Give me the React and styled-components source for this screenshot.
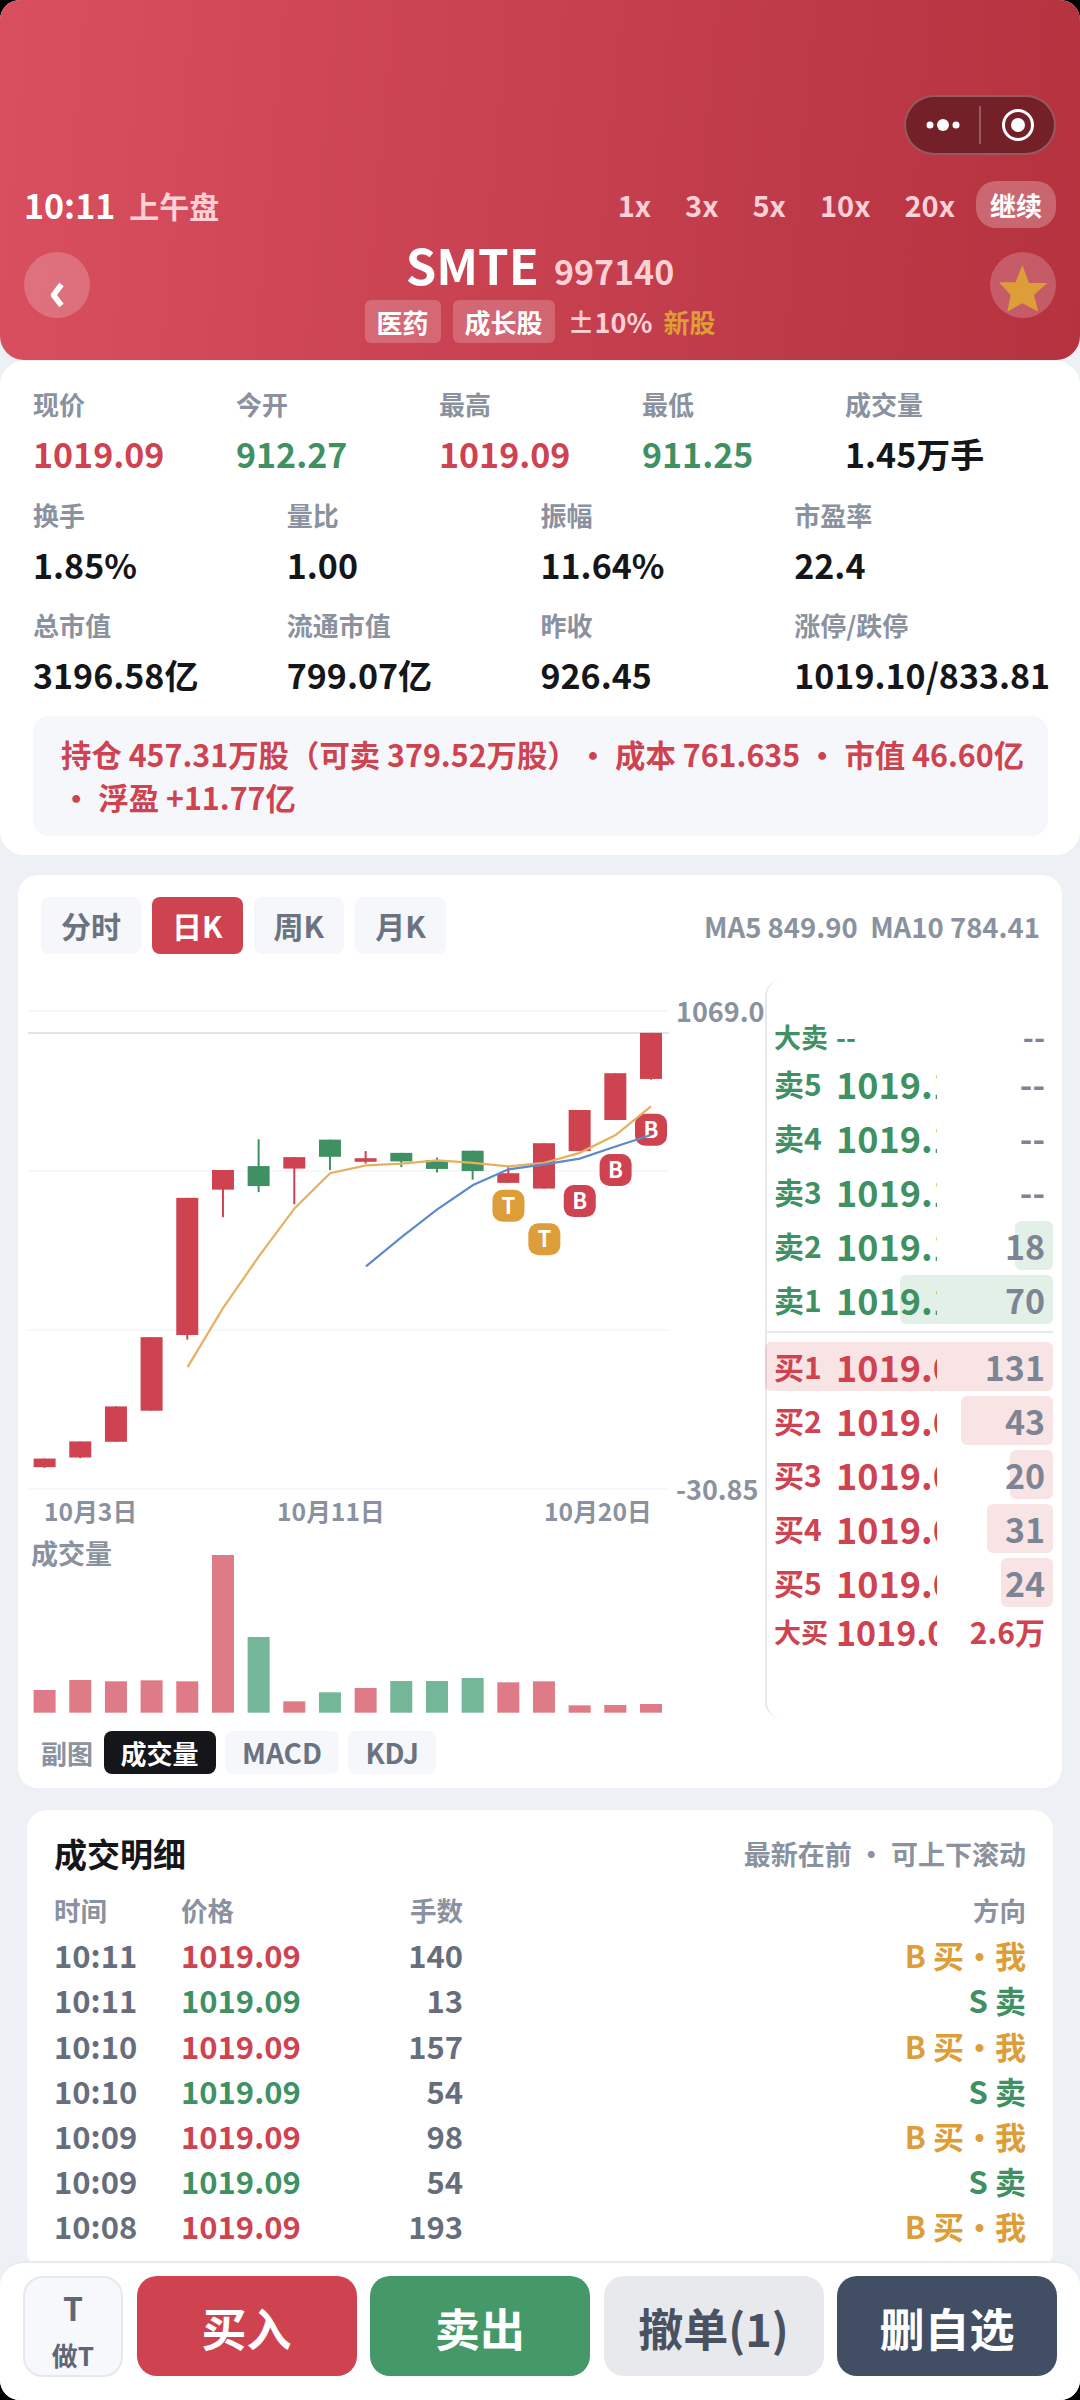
import React from "react";
import styled, { createGlobalStyle } from "styled-components";

const RED = "#cf4250";
const GREEN = "#3f9163";
const ORANGE = "#dd9d38";
const GRAY = "#8a92a0";
const DARK = "#14161a";

const GlobalStyle = createGlobalStyle`
  html, body { margin: 0; padding: 0; background: #000; }
  * { box-sizing: border-box; }
`;

const Screen = styled.div`
  position: relative;
  width: 1080px;
  height: 2400px;
  overflow: hidden;
  border-radius: 20px;
  background: #edf0f5;
  font-family: "Noto Sans CJK SC", "Noto Sans", sans-serif;
  font-weight: 700;
`;

/* header */
const Header = styled.header`
  height: 360px;
  padding: 95px 24px 0;
  border-radius: 0 0 24px 24px;
  background: linear-gradient(95deg, #d94f60, #b5323f);
  color: #fff;
`;
const CapsuleRow = styled.div`
  display: flex;
  justify-content: flex-end;
`;
const Capsule = styled.div`
  display: flex;
  align-items: center;
  width: 152px;
  height: 60px;
  border: 2px solid rgba(255, 255, 255, 0.25);
  border-radius: 30px;
  background: #742028;
`;
const CapsuleCell = styled.div`
  flex: 1;
  display: flex;
  justify-content: center;
`;
const CapsuleDivider = styled.div`
  width: 2px;
  height: 38px;
  background: rgba(255, 255, 255, 0.25);
`;
const SpeedRow = styled.div`
  display: flex;
  align-items: center;
  justify-content: space-between;
  height: 47px;
  margin-top: 26px;
`;
const Clock = styled.div`
  display: flex;
  align-items: center;
  gap: 14px;
  font-size: 34px;
  line-height: 40px;
`;
const Session = styled.span`
  color: #ffd0d6;
  font-size: 30px;
`;
const Speeds = styled.div`
  display: flex;
  align-items: center;
  gap: 8px;
`;
const Speed = styled.div`
  height: 47px;
  padding: 0 ${(p) => (p.$active ? 14 : 13)}px;
  border-radius: 20px;
  background: ${(p) => (p.$active ? "rgba(255,255,255,.25)" : "transparent")};
  color: ${(p) => (p.$active ? "#fff" : "#fbd0d6")};
  font-size: ${(p) => (p.$active ? 26 : 29)}px;
  line-height: 47px;
`;
const Identity = styled.div`
  display: grid;
  grid-template-columns: 66px 1fr 66px;
  margin-top: 12px;
`;
const RoundButton = styled.div`
  display: flex;
  align-items: center;
  justify-content: center;
  width: 66px;
  height: 66px;
  margin-top: 12px;
  border-radius: 50%;
  background: rgba(255, 255, 255, 0.2);
`;
const Chevron = styled.svg`
  margin-top: 20px;
`;
const FavStar = styled.svg`
  margin-top: 6px;
`;
const Titles = styled.div`
  display: flex;
  flex-direction: column;
  align-items: center;
`;
const NameLine = styled.div`
  display: flex;
  align-items: baseline;
  gap: 15px;
  height: 58px;
  margin-top: -5px;
  line-height: 58px;
`;
const Ticker = styled.span`
  font-size: 49px;
`;
const Code = styled.span`
  color: #ffd0d6;
  font-size: 34px;
`;
const TagLine = styled.div`
  display: flex;
  align-items: center;
  height: 43px;
  margin-top: 7px;
  font-size: 26px;
`;
const Tag = styled.span`
  height: 43px;
  margin-right: 12px;
  padding: 0 12px;
  border-radius: 6px;
  background: rgba(255, 255, 255, 0.2);
  line-height: 43px;
`;
const Limit = styled.span`
  margin: 0 11px 0 1px;
  color: #ffd0d6;
  font-size: 27px;
`;
const NewTag = styled.span`
  color: ${ORANGE};
`;

/* quote */
const Quote = styled.section`
  margin-top: 1px;
  padding: 25px 32px 19px 33px;
  border-radius: 24px;
  background: #fff;
`;
const StatGrid = styled.div`
  display: grid;
  grid-template-columns: repeat(${(p) => p.$cols}, minmax(0, 1fr));
  margin-bottom: ${(p) => (p.$last ? 0 : 20.5)}px;
`;
const StatLabel = styled.div`
  color: ${GRAY};
  font-size: 26px;
  line-height: 36px;
`;
const StatValue = styled.div`
  margin-top: 10px;
  color: ${(p) => p.$color || DARK};
  font-size: 34px;
  line-height: 44px;
  white-space: nowrap;
`;
const Position = styled.div`
  margin-top: 19px;
  padding: 17px 10px 17px 28px;
  border-radius: 16px;
  background: #f5f7fb;
  color: ${RED};
  font-size: 30.4px;
  line-height: 43px;
`;

/* chart card */
const ChartCard = styled.section`
  margin: 20px 18px 0;
  padding-top: 22px;
  height: 913px;
  border-radius: 20px;
  background: #fff;
`;
const ChartTop = styled.div`
  display: flex;
  align-items: center;
  justify-content: space-between;
  padding: 0 22px 0 23px;
`;
const Tabs = styled.div`
  display: flex;
  gap: 11px;
`;
const Tab = styled.div`
  height: 57px;
  padding: 0 20px;
  border-radius: 8px;
  background: ${(p) => (p.$active ? RED : "#f5f7fb")};
  color: ${(p) => (p.$active ? "#fff" : "#6b7280")};
  font-size: 30px;
  line-height: 57px;
  text-align: center;
`;
const MaText = styled.div`
  color: ${GRAY};
  font-size: 27.5px;
`;
const ChartBody = styled.div`
  display: flex;
  margin-top: 26px;
  height: 738px;
`;
const Book = styled.div`
  flex: 1;
  padding: 34px 9px 0 0;
  border-left: 2px solid #e6e9ef;
  border-radius: 16px 0 0 16px;
`;
const BookRow = styled.div`
  position: relative;
  display: grid;
  grid-template-columns: 62px 101px 1fr;
  align-items: center;
  height: ${(p) => (p.$big ? 42 : 54)}px;
  padding: 0 8px 0 7px;
  color: ${(p) => (p.$side === "buy" ? RED : GREEN)};
`;
const BookBar = styled.div`
  position: absolute;
  top: 3px;
  bottom: 2px;
  right: 0;
  border-radius: 6px;
  background: ${(p) =>
    p.$side === "buy" ? "rgba(207,66,80,.15)" : "rgba(69,152,103,.15)"};
`;
const BookLabel = styled.span`
  position: relative;
  font-size: ${(p) => (p.$big ? 27 : 30)}px;
  white-space: nowrap;
`;
const BookPrice = styled.span`
  position: relative;
  overflow: hidden;
  font-size: ${(p) => (p.$big ? 34 : 36)}px;
  white-space: nowrap;
`;
const BookQty = styled.span`
  position: relative;
  color: ${(p) => p.$color || "#7d8594"};
  font-size: ${(p) => (p.$big ? 30 : 34)}px;
  text-align: right;
  white-space: nowrap;
`;
const BookDivider = styled.div`
  height: 2px;
  margin: 5px 0 6px;
  background: #e6e9ef;
`;
const SubRow = styled.div`
  display: flex;
  align-items: center;
  gap: 9.5px;
  margin-top: 13px;
  padding-left: 23px;
`;
const SubLabel = styled.span`
  margin-right: 1px;
  color: ${GRAY};
  font-size: 26px;
`;
const SubTab = styled.div`
  height: 43px;
  padding: 0 17px;
  border-radius: 8px;
  background: ${(p) => (p.$active ? DARK : "#f5f7fb")};
  color: ${(p) => (p.$active ? "#fff" : "#6b7280")};
  font-size: ${(p) => (p.$active ? 26 : 28)}px;
  line-height: 43px;
`;

/* trades */
const Trades = styled.section`
  margin: 22px 27px 0;
  padding: 23px 27px 0;
  height: 460px;
  border-radius: 20px;
  background: #fff;
`;
const TradesTop = styled.div`
  display: flex;
  align-items: center;
  justify-content: space-between;
  height: 40px;
`;
const TradesTitle = styled.div`
  color: ${DARK};
  font-size: 33px;
`;
const TradesHint = styled.div`
  color: ${GRAY};
  font-size: 27px;
`;
const TradeRow = styled.div`
  display: grid;
  grid-template-columns: 127px 150px 132px 1fr;
  align-items: center;
  height: 45.2px;
  margin-top: ${(p) => (p.$head ? 14 : 0)}px;
  color: ${(p) => (p.$head ? GRAY : "#666e7d")};
  font-size: ${(p) => (p.$head ? 26.5 : 31)}px;
`;
const TradePrice = styled.span`
  color: ${(p) => p.$color};
`;
const Right = styled.span`
  text-align: right;
  color: ${(p) => p.$color || "inherit"};
`;

/* footer */
const Footer = styled.footer`
  position: absolute;
  left: 0;
  right: 0;
  bottom: 0;
  display: flex;
  gap: 13.5px;
  height: 139px;
  padding: 13px 23px 0;
  border-top: 2px solid #e8eaee;
  border-radius: 24px 24px 0 0;
  background: #fff;
`;
const DoT = styled.div`
  display: flex;
  flex-direction: column;
  align-items: center;
  width: 100px;
  height: 101px;
  padding-top: 8px;
  border: 2px solid #e5e8ef;
  border-radius: 20px;
  background: #f6f8fc;
  color: #5f6775;
`;
const DoTMark = styled.span`
  font-size: 32px;
  line-height: 42px;
`;
const DoTText = styled.span`
  margin-top: 10px;
  font-size: 26px;
  line-height: 34px;
`;
const Action = styled.div`
  flex: 1;
  height: 100px;
  border-radius: 20px;
  background: ${(p) => p.$bg};
  color: ${(p) => p.$fg || "#fff"};
  font-size: 45px;
  line-height: 104px;
  text-align: center;
`;

/* data */
const candleX = (i) => 44.6 + i * 35.67;
const zy = (v) => v / 2.8 + 960;
const zx = (v) => v / 2.063;

const candles = [
  ["r", 1396, 1420, 1396, 1422],
  ["r", 1348, 1393, 1348, 1395],
  ["r", 1250, 1349, 1250, 1349],
  ["r", 1056, 1262, 1056, 1262],
  ["r", 666, 1050, 666, 1063],
  ["r", 588, 643, 588, 720],
  ["g", 577, 633, 502, 650],
  ["r", 552, 584, 552, 684],
  ["g", 503, 551, 503, 588],
  ["r", 555, 565, 535, 570],
  ["g", 540, 564, 540, 580],
  ["g", 560, 585, 553, 595],
  ["g", 534, 591, 534, 615],
  ["r", 597, 624, 580, 624],
  ["r", 513, 640, 513, 640],
  ["r", 420, 535, 420, 535],
  ["r", 317, 448, 317, 448],
  ["r", 204, 333, 204, 335],
];
const ma5 = [[387, 1140], [460, 975], [534, 830], [608, 695], [681, 597], [755, 575], [829, 570], [902, 561], [976, 568], [1049, 578], [1123, 568], [1196, 540], [1270, 490], [1343, 410]];
const ma10 = [[755, 858], [829, 775], [902, 698], [976, 630], [1049, 586], [1123, 572], [1196, 556], [1270, 522], [1343, 490]];
const markers = [
  ["T", 1049, 688, ORANGE],
  ["T", 1123, 782, ORANGE],
  ["B", 1196, 675, RED],
  ["B", 1270, 588, RED],
  ["B", 1343, 475, RED],
];
const volumeTops = [630, 600, 604, 601, 604, 225, 471, 664, 637, 624, 603, 603, 594, 607, 604, 676, 675, 672];
const volumeUp = [1, 1, 1, 1, 1, 1, 0, 1, 0, 1, 0, 0, 0, 1, 1, 1, 1, 1];
const gridLines = [1011, 1171, 1330, 1489];

const toPoints = (list) => list.map(([x, y]) => `${zx(x)},${zy(y)}`).join(" ");

const sells = [
  ["卖5", "--", 0],
  ["卖4", "--", 0],
  ["卖3", "--", 0],
  ["卖2", "18", 38],
  ["卖1", "70", 153],
];
const buys = [
  ["买1", "131", 288],
  ["买2", "43", 92],
  ["买3", "20", 43],
  ["买4", "31", 66],
  ["买5", "24", 52],
];
const trades = [
  ["10:11", "b", "140"],
  ["10:11", "s", "13"],
  ["10:10", "b", "157"],
  ["10:10", "s", "54"],
  ["10:09", "b", "98"],
  ["10:09", "s", "54"],
  ["10:08", "b", "193"],
];

function KChart() {
  const font = '"Noto Sans CJK SC", sans-serif';
  return (
    <svg width="747" height="738" viewBox="18 980 747 738" style={{ flex: "none" }}>
      {gridLines.map((y) => (
        <line key={y} x1="28" x2="669" y1={y} y2={y} stroke="#f5f6f8" strokeWidth="1.5" />
      ))}
      <line x1="28" x2="669" y1="1033" y2="1033" stroke="#e2e4e9" strokeWidth="2" />
      {candles.map(([c, top, bottom, hi, lo], i) => {
        const fill = c === "r" ? RED : GREEN;
        return (
          <g key={i} fill={fill}>
            <rect x={candleX(i) - 1} y={zy(hi)} width="2" height={(lo - hi) / 2.8} />
            <rect x={candleX(i) - 11} y={zy(top)} width="22" height={(bottom - top) / 2.8} />
          </g>
        );
      })}
      {markers.map(([t, x, y, fill]) => (
        <g key={x}>
          <rect x={zx(x) - 16} y={zy(y) - 16} width="32" height="32" rx="10" fill={fill} />
          <text x={zx(x)} y={zy(y) + 8} textAnchor="middle" fill="#fff" fontFamily={font} fontWeight="700" fontSize="22">
            {t}
          </text>
        </g>
      ))}
      <polyline points={toPoints(ma5)} fill="none" stroke="#e6b062" strokeWidth="2.2" />
      <polyline points={toPoints(ma10)} fill="none" stroke="#5b8bcb" strokeWidth="2.2" />
      <g fill={GRAY} fontFamily={font} fontWeight="700">
        <text x="676" y="1022" fontSize="27">1069.0</text>
        <text x="676" y="1500" fontSize="27">-30.85</text>
        <text x="44" y="1521" fontSize="24.7">10月3日</text>
        <text x="277" y="1521" fontSize="24.7">10月11日</text>
        <text x="544" y="1521" fontSize="24.7">10月20日</text>
        <text x="31" y="1564" fontSize="27">成交量</text>
      </g>
      {volumeTops.map((t, i) => {
        const y = 1480 + t / 3;
        return (
          <rect
            key={i}
            x={candleX(i) - 11}
            y={y}
            width="22"
            height={1712.7 - y}
            fill={volumeUp[i] ? "#df7b87" : "#74b698"}
          />
        );
      })}
    </svg>
  );
}

export default function App() {
  return (
    <Screen>
      <GlobalStyle />
      <Header>
        <CapsuleRow>
          <Capsule>
            <CapsuleCell>
              <svg width="36" height="20" viewBox="0 0 36 20">
                <circle cx="5" cy="10" r="3.5" fill="#fff" />
                <circle cx="18" cy="10" r="6" fill="#fff" />
                <circle cx="31" cy="10" r="3.5" fill="#fff" />
              </svg>
            </CapsuleCell>
            <CapsuleDivider />
            <CapsuleCell>
              <svg width="34" height="34" viewBox="0 0 34 34">
                <circle cx="17" cy="17" r="14.5" fill="none" stroke="#fff" strokeWidth="3" />
                <circle cx="17" cy="17" r="7" fill="#fff" />
              </svg>
            </CapsuleCell>
          </Capsule>
        </CapsuleRow>
        <SpeedRow>
          <Clock>
            10:11
            <Session>上午盘</Session>
          </Clock>
          <Speeds>
            {["1x", "3x", "5x", "10x", "20x"].map((s) => (
              <Speed key={s}>{s}</Speed>
            ))}
            <Speed $active>继续</Speed>
          </Speeds>
        </SpeedRow>
        <Identity>
          <RoundButton>
            <Chevron width="14" height="26" viewBox="0 0 14 26">
              <path d="M11.5 2.5 L3.5 13 L11.5 23.5" fill="none" stroke="#fff" strokeWidth="5.5" strokeLinejoin="round" />
            </Chevron>
          </RoundButton>
          <Titles>
            <NameLine>
              <Ticker>SMTE</Ticker>
              <Code>997140</Code>
            </NameLine>
            <TagLine>
              <Tag>医药</Tag>
              <Tag>成长股</Tag>
              <Limit>±10%</Limit>
              <NewTag>新股</NewTag>
            </TagLine>
          </Titles>
          <RoundButton>
            <FavStar width="49" height="47" viewBox="0 0 49 47">
              <polygon points="23.3,0 30,18 48.3,18 35,30 39.3,46.7 23.3,38.3 8.3,46.7 11.7,30 0,17.3 16.7,17.3" fill={ORANGE} />
            </FavStar>
          </RoundButton>
        </Identity>
      </Header>

      <Quote>
        <StatGrid $cols={5}>
          {[
            ["现价", "1019.09", RED],
            ["今开", "912.27", GREEN],
            ["最高", "1019.09", RED],
            ["最低", "911.25", GREEN],
            ["成交量", "1.45万手"],
          ].map(([l, v, c]) => (
            <div key={l}>
              <StatLabel>{l}</StatLabel>
              <StatValue $color={c}>{v}</StatValue>
            </div>
          ))}
        </StatGrid>
        <StatGrid $cols={4}>
          {[
            ["换手", "1.85%"],
            ["量比", "1.00"],
            ["振幅", "11.64%"],
            ["市盈率", "22.4"],
          ].map(([l, v]) => (
            <div key={l}>
              <StatLabel>{l}</StatLabel>
              <StatValue>{v}</StatValue>
            </div>
          ))}
        </StatGrid>
        <StatGrid $cols={4} $last>
          {[
            ["总市值", "3196.58亿"],
            ["流通市值", "799.07亿"],
            ["昨收", "926.45"],
            ["涨停/跌停", "1019.10/833.81"],
          ].map(([l, v]) => (
            <div key={l}>
              <StatLabel>{l}</StatLabel>
              <StatValue>{v}</StatValue>
            </div>
          ))}
        </StatGrid>
        <Position>
          持仓 457.31万股（可卖 379.52万股）• 成本 761.635 • 市值 46.60亿 • 浮盈 +11.77亿
        </Position>
      </Quote>

      <ChartCard>
        <ChartTop>
          <Tabs>
            <Tab>分时</Tab>
            <Tab $active>日K</Tab>
            <Tab>周K</Tab>
            <Tab>月K</Tab>
          </Tabs>
          <MaText>MA5 849.90&nbsp;&nbsp;MA10 784.41</MaText>
        </ChartTop>
        <ChartBody>
          <KChart />
          <Book>
            <BookRow $big $side="sell">
              <BookLabel $big>大卖</BookLabel>
              <BookLabel $big>--</BookLabel>
              <BookQty $big>--</BookQty>
            </BookRow>
            {sells.map(([l, q, w]) => (
              <BookRow key={l} $side="sell">
                {w > 0 && <BookBar $side="sell" style={{ width: w }} />}
                <BookLabel>{l}</BookLabel>
                <BookPrice>1019.10</BookPrice>
                <BookQty>{q}</BookQty>
              </BookRow>
            ))}
            <BookDivider />
            {buys.map(([l, q, w]) => (
              <BookRow key={l} $side="buy">
                <BookBar $side="buy" style={{ width: w }} />
                <BookLabel>{l}</BookLabel>
                <BookPrice>1019.09</BookPrice>
                <BookQty>{q}</BookQty>
              </BookRow>
            ))}
            <BookRow $big $side="buy">
              <BookLabel $big>大买</BookLabel>
              <BookPrice $big>1019.09</BookPrice>
              <BookQty $big $color={RED}>2.6万</BookQty>
            </BookRow>
          </Book>
        </ChartBody>
        <SubRow>
          <SubLabel>副图</SubLabel>
          <SubTab $active>成交量</SubTab>
          <SubTab>MACD</SubTab>
          <SubTab>KDJ</SubTab>
        </SubRow>
      </ChartCard>

      <Trades>
        <TradesTop>
          <TradesTitle>成交明细</TradesTitle>
          <TradesHint>最新在前 • 可上下滚动</TradesHint>
        </TradesTop>
        <TradeRow $head>
          <span>时间</span>
          <span>价格</span>
          <Right>手数</Right>
          <Right>方向</Right>
        </TradeRow>
        {trades.map(([time, side, qty], i) => (
          <TradeRow key={i}>
            <span>{time}</span>
            <TradePrice $color={side === "b" ? RED : GREEN}>1019.09</TradePrice>
            <Right>{qty}</Right>
            <Right $color={side === "b" ? ORANGE : GREEN}>
              {side === "b" ? "B 买·我" : "S 卖"}
            </Right>
          </TradeRow>
        ))}
      </Trades>

      <Footer>
        <DoT>
          <DoTMark>T</DoTMark>
          <DoTText>做T</DoTText>
        </DoT>
        <Action $bg={RED}>买入</Action>
        <Action $bg="#459867">卖出</Action>
        <Action $bg="#e7e9ed" $fg="#4a5262">撤单(1)</Action>
        <Action $bg="#424e64">删自选</Action>
      </Footer>
    </Screen>
  );
}
